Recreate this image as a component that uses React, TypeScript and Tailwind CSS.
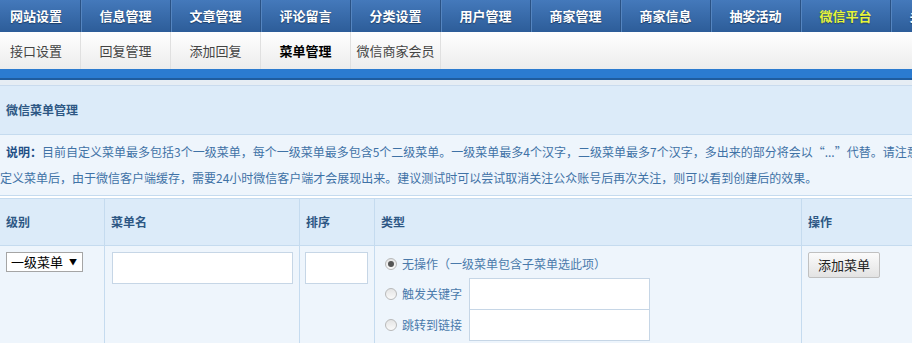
const topNav = ["网站设置", "信息管理", "文章管理", "评论留言", "分类设置", "用户管理", "商家管理", "商家信息", "抽奖活动", "微信平台", "关于我们"];
const subNav = ["接口设置", "回复管理", "添加回复", "菜单管理", "微信商家会员"];

const Radio = ({ checked }: { checked?: boolean }) => (
  <span className="w-[12px] h-[12px] rounded-full border border-[#b9b9b9] bg-gradient-to-b from-[#e4e4e4] to-[#fafafa] flex items-center justify-center shrink-0">
    {checked && <span className="w-[6px] h-[6px] rounded-full bg-[#555]" />}
  </span>
);

export default function App() {
  return (
    <div className="w-[912px] h-[343px] overflow-hidden bg-white font-['Noto_Sans_CJK_SC',sans-serif]">
      {/* top nav */}
      <div className="h-[32px] flex bg-gradient-to-b from-[#4479bb] to-[#2d5d99] whitespace-nowrap">
        {topNav.map((t, i) => (
          <div
            key={t}
            className={`h-full shrink-0 flex items-center border-r border-[#2a5285] shadow-[1px_0_0_#5585c0] text-[13px] font-bold ${
              i === 0 ? "w-[81px] pl-[10px]" : "w-[90px] justify-center"
            } ${t === "微信平台" ? "text-[#e6f53a]" : "text-white"} [text-shadow:0_1px_1px_#1d3d66]`}
          >
            {t}
          </div>
        ))}
      </div>
      {/* sub nav */}
      <div className="h-[37px] flex bg-gradient-to-b from-white to-[#ececec] whitespace-nowrap">
        {subNav.map((t, i) => (
          <div
            key={t}
            className={`h-full shrink-0 flex items-center border-r border-[#e0e0e0] text-[13px] ${
              i === 0 ? "w-[81px] pl-[10px]" : "w-[90px] justify-center"
            } ${t === "菜单管理" ? "font-bold text-black" : "text-[#444]"}`}
          >
            {t}
          </div>
        ))}
      </div>
      <div className="h-[11px] bg-[#2b7bd0] border-b-2 border-[#1f5c9e]" />
      <div className="h-[6px] bg-[#e6edf4] border-b border-[#c9dbee]" />

      {/* panel title */}
      <div className="h-[49px] bg-[#dcebf9] border-b border-[#c5dbef] flex items-center pl-[6px] text-[12px] font-bold text-[#2d5784]">
        微信菜单管理
      </div>
      {/* description */}
      <div className="h-[61px] bg-[#eef5fc] border-b border-[#c5dbef] pl-[6px] pt-[4px] text-[12px] leading-[26px] text-[#3f72a6] whitespace-nowrap overflow-hidden">
        <div>
          <span className="font-bold text-[#1f4f86]">说明：</span>
          目前自定义菜单最多包括3个一级菜单，每个一级菜单最多包含5个二级菜单。一级菜单最多4个汉字，二级菜单最多7个汉字，多出来的部分将会以“...”代替。请注意，创建自
        </div>
        <div className="-ml-[6px]">定义菜单后，由于微信客户端缓存，需要24小时微信客户端才会展现出来。建议测试时可以尝试取消关注公众账号后再次关注，则可以看到创建后的效果。</div>
      </div>

      {/* table */}
      <div className="grid grid-cols-[105px_195px_75px_427px_1fr] mt-[2px] border-t border-[#c5dbef] text-[12px]">
        {["级别", "菜单名", "排序", "类型", "操作"].map((h, i) => (
          <div
            key={h}
            className={`h-[47px] bg-[#dcebf9] border-b border-[#c5dbef] flex items-center pl-[6px] font-bold text-[#2d5784] ${
              i < 4 ? "border-r" : ""
            }`}
          >
            {h}
          </div>
        ))}

        <div className="bg-[#eef5fc] border-r border-[#c5dbef] pl-[6px] pt-[6px] h-[100px]">
          <div className="w-[77px] h-[20px] border border-[#a5a5a5] bg-white flex items-center pl-[4px] pr-[5px] justify-between text-[13px] text-black">
            <span>一级菜单</span>
            <span className="text-[8px]">▼</span>
          </div>
        </div>
        <div className="bg-[#eef5fc] border-r border-[#c5dbef] pl-[7px] pt-[6px]">
          <div className="w-[181px] h-[32px] border border-[#c6d6e6] bg-white" />
        </div>
        <div className="bg-[#eef5fc] border-r border-[#c5dbef] pl-[5px] pt-[6px]">
          <div className="w-[63px] h-[32px] border border-[#c6d6e6] bg-white" />
        </div>
        <div className="bg-[#eef5fc] border-r border-[#c5dbef] pl-[10px] pt-[8px] text-[#4a7aab]">
          <div className="flex items-center gap-[5px] h-[20px]">
            <Radio checked />
            <span>无操作（一级菜单包含子菜单选此项）</span>
          </div>
          <div className="flex items-center gap-[5px] h-[31px] mt-[4px]">
            <Radio />
            <span className="w-[62px]">触发关键字</span>
            <div className="w-[181px] h-[32px] border border-[#c6d6e6] bg-white" />
          </div>
          <div className="flex items-center gap-[5px] h-[31px]">
            <Radio />
            <span className="w-[62px]">跳转到链接</span>
            <div className="w-[181px] h-[32px] border border-[#c6d6e6] bg-white" />
          </div>
        </div>
        <div className="bg-[#eef5fc] pl-[6px] pt-[6px]">
          <button className="w-[72px] h-[26px] border border-[#c0c0c0] rounded-[2px] bg-gradient-to-b from-[#fbfbfb] to-[#e3e3e3] text-[13px] text-[#222]">
            添加菜单
          </button>
        </div>
      </div>
    </div>
  );
}
